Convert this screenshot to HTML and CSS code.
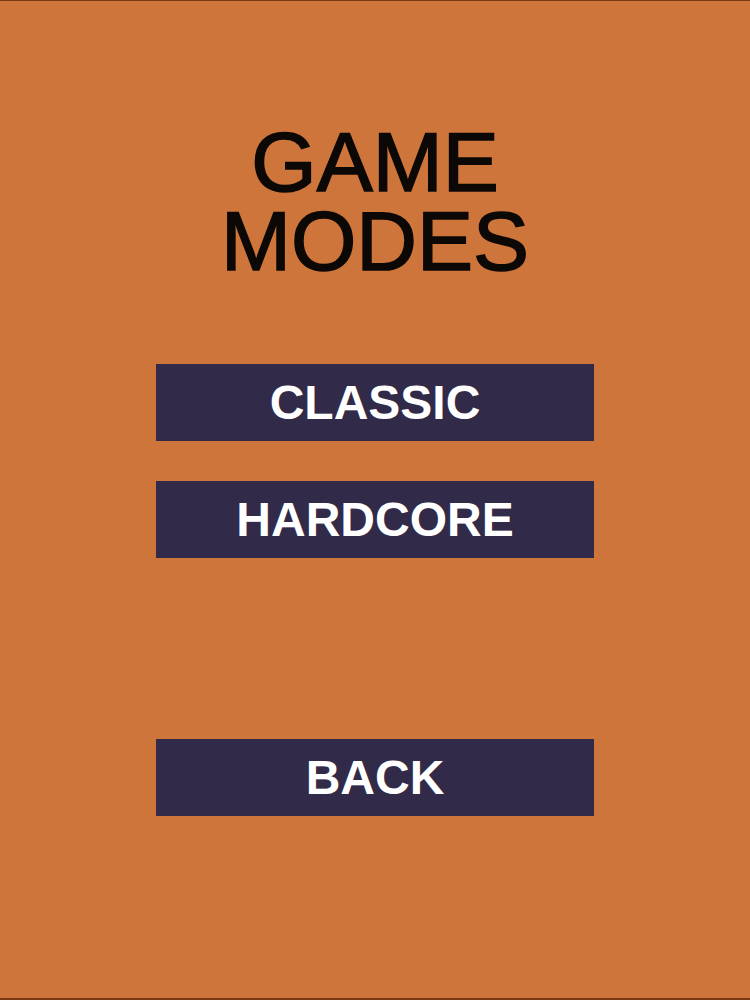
FILE: index.html
```html
<!DOCTYPE html>
<html>
<head>
<meta charset="utf-8">
<link rel="stylesheet" href="styles.css">
</head>
<body>
<div class="screen">
  <h1 class="title">GAME<br>MODES</h1>
  <div class="modes">
    <button class="btn">CLASSIC</button>
    <button class="btn">HARDCORE</button>
  </div>
  <button class="btn back">BACK</button>
</div>
</body>
</html>
```
FILE: styles.css
```css
html, body {
  margin: 0;
  padding: 0;
  background: #ce753c;
}
.screen {
  box-sizing: border-box;
  width: 750px;
  height: 1000px;
  border-top: 1px solid #7a3812;
  border-bottom: 2px solid #7a3812;
  padding-top: 122px;
  display: flex;
  flex-direction: column;
  align-items: center;
  font-family: "Liberation Sans", Arial, sans-serif;
}
.title {
  margin: 0;
  font-size: 84px;
  font-weight: 400;
  line-height: 79px;
  color: #0b0806;
  -webkit-text-stroke: 1.6px #0b0806;
  text-align: center;
}
.modes {
  margin-top: 83px;
  display: flex;
  flex-direction: column;
  gap: 40px;
}
.btn {
  width: 438px;
  height: 77px;
  border: none;
  padding: 0;
  margin: 0;
  background: #312a48;
  color: #ffffff;
  font-family: "Liberation Sans", Arial, sans-serif;
  font-weight: 700;
  font-size: 48px;
  line-height: 1;
  display: flex;
  align-items: center;
  justify-content: center;
}
.back {
  margin-top: 181px;
}
```
